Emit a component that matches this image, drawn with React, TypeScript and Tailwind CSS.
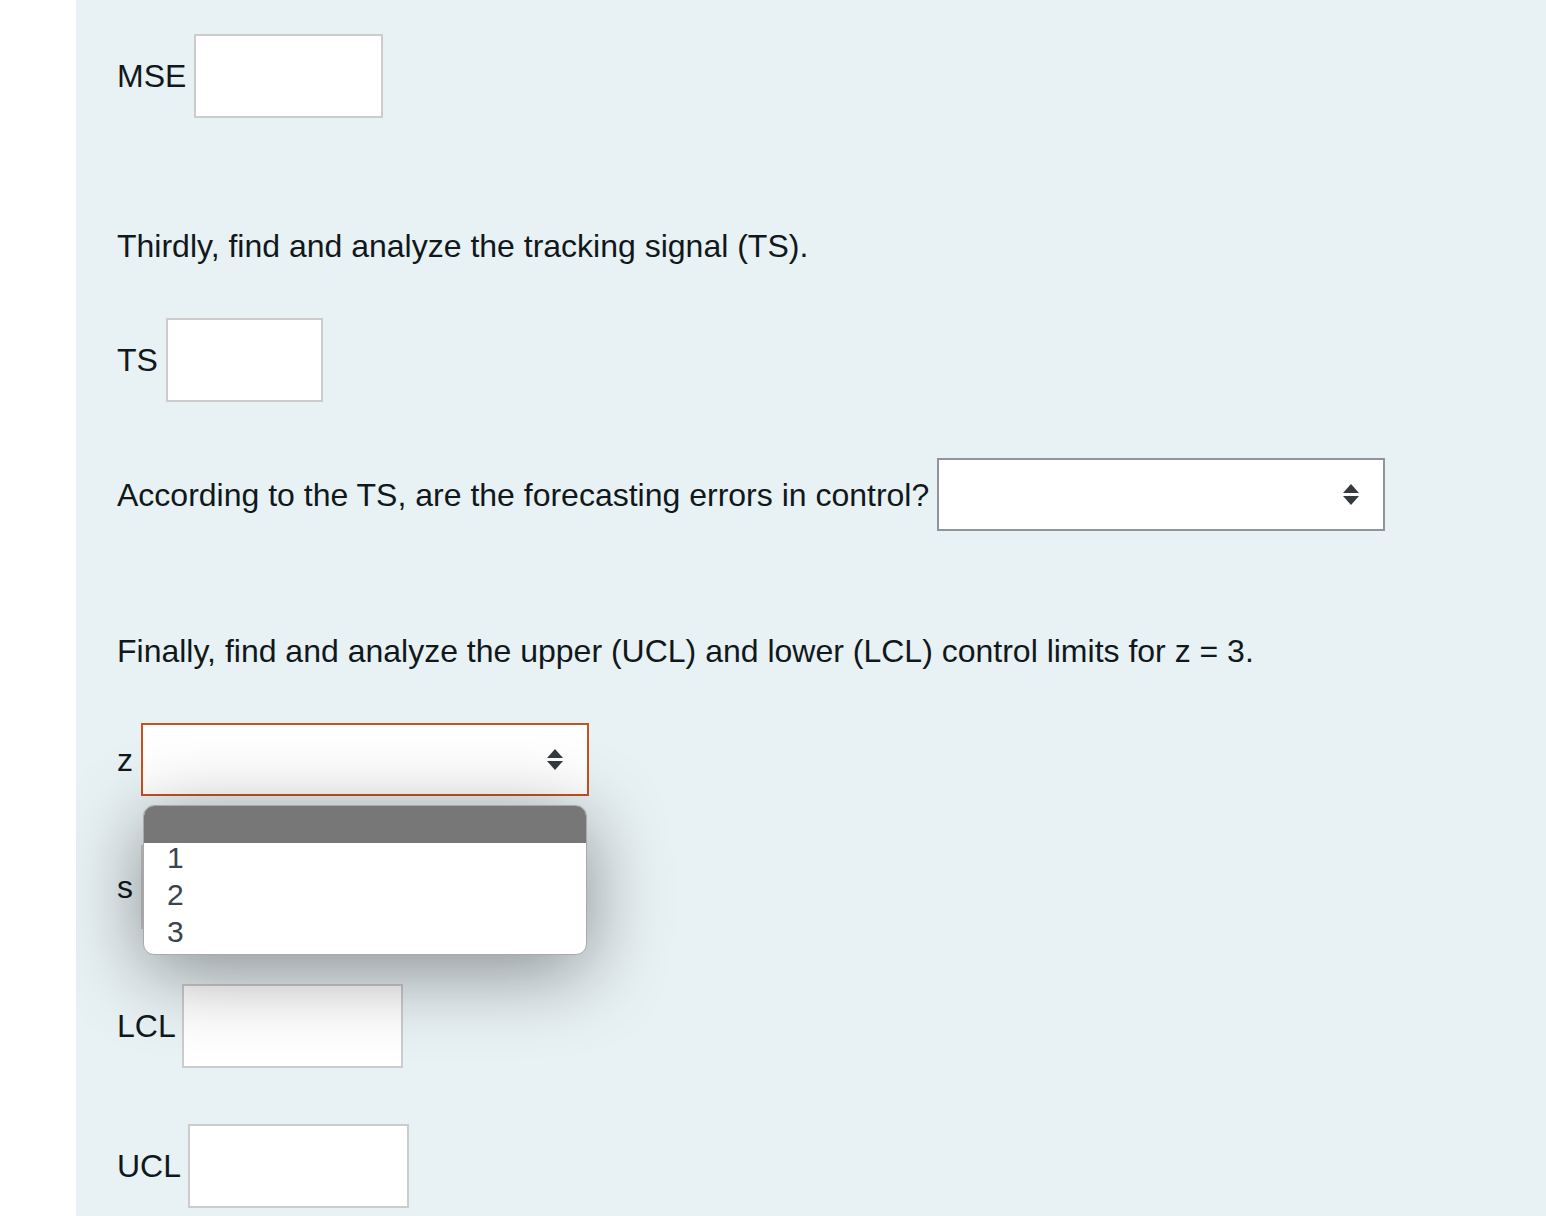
import React from "react";

const font = { fontFamily: '"Liberation Sans", Arial, sans-serif' };

function Arrows() {
  return (
    <svg width="16" height="21" viewBox="0 0 16 21" className="shrink-0">
      <polygon points="8,0 16,9 0,9" fill="#343a40" />
      <polygon points="0,12 16,12 8,21" fill="#343a40" />
    </svg>
  );
}

function Input({ w }: { w: string }) {
  return <div className={`${w} h-[84px] border-2 border-[#cccccc] bg-white shrink-0`} />;
}

export default function App() {
  return (
    <div className="flex min-h-screen bg-white text-[32px] text-[#11181b]" style={font}>
      <div className="w-[76px] shrink-0" />
      <div className="flex-1 bg-[#e8f1f4] pl-[41px] pt-[34px] pb-[8px] overflow-hidden">
        <div className="flex items-center gap-[8px]">
          <span>MSE</span>
          <Input w="w-[189px]" />
        </div>

        <p className="mt-[110px] leading-[36px]">Thirdly, find and analyze the tracking signal (TS).</p>

        <div className="mt-[54px] flex items-center gap-[8px]">
          <span>TS</span>
          <Input w="w-[157px]" />
        </div>

        <div className="mt-[56px] flex items-center gap-[8px]">
          <span>According to the TS, are the forecasting errors in control?</span>
          <div className="w-[448px] h-[73px] border-2 border-[#8f959c] bg-white flex items-center justify-end pr-[24px]">
            <Arrows />
          </div>
        </div>

        <p className="mt-[102px] leading-[36px]">
          Finally, find and analyze the upper (UCL) and lower (LCL) control limits for z = 3.
        </p>

        <div className="mt-[54px] flex items-center gap-[8px]">
          <span>z</span>
          <div className="relative">
            <div className="w-[448px] h-[73px] border-2 border-[#c4531f] bg-white flex items-center justify-end pr-[24px]">
              <Arrows />
            </div>
            <div className="absolute z-10 top-[82px] left-[2px] w-[444px] rounded-[11px] border border-[#a9a9a9] bg-white overflow-hidden shadow-[0_16px_80px_rgba(0,0,0,0.42)] text-[30px] text-[#3b4350]">
              <div className="h-[37px] bg-[#777777]" />
              <div className="h-[37px] leading-[29px] pl-[23px]">1</div>
              <div className="h-[37px] leading-[29px] pl-[23px]">2</div>
              <div className="h-[37px] leading-[29px] pl-[23px]">3</div>
            </div>
          </div>
        </div>

        <div className="mt-[49px] flex items-center gap-[8px]">
          <span>s</span>
          <Input w="w-[220px]" />
        </div>

        <div className="mt-[55px] flex items-center gap-[6px]">
          <span>LCL</span>
          <Input w="w-[221px]" />
        </div>

        <div className="mt-[56px] flex items-center gap-[7px]">
          <span>UCL</span>
          <Input w="w-[221px]" />
        </div>
      </div>
    </div>
  );
}
